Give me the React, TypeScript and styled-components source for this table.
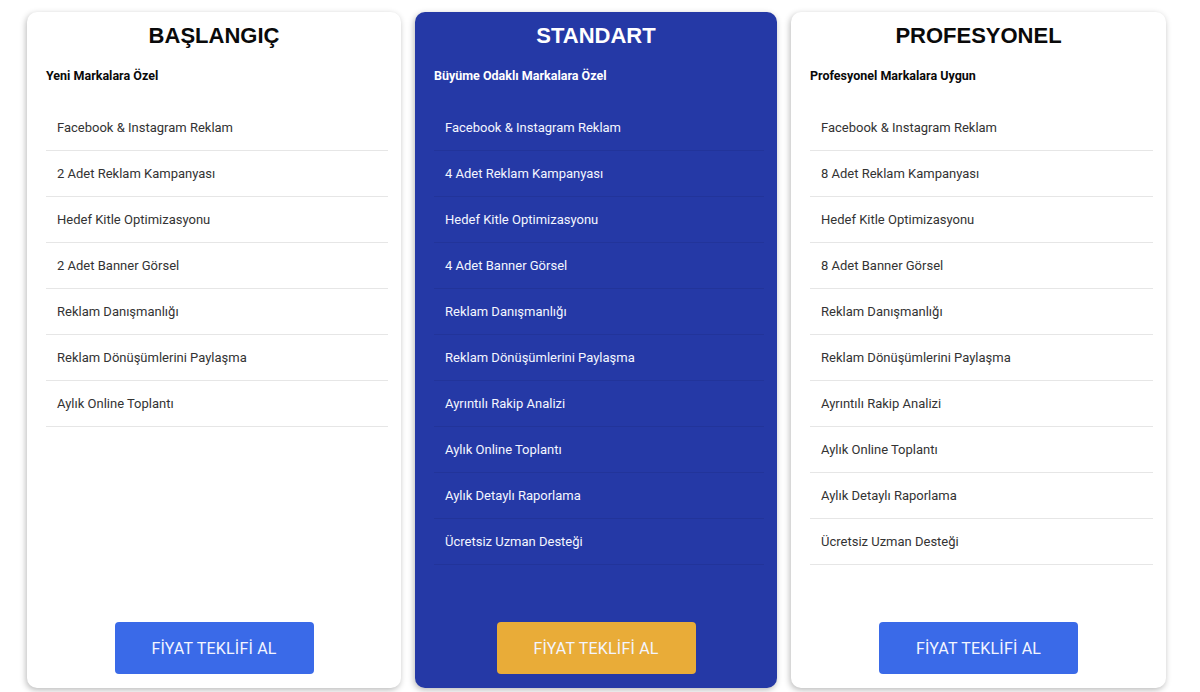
import styled, { createGlobalStyle } from 'styled-components';

const GlobalStyle = createGlobalStyle`
  html, body {
    margin: 0;
    padding: 0;
    background: #ffffff;
  }
  * {
    box-sizing: border-box;
  }
`;

const Page = styled.div`
  display: grid;
  grid-template-columns: 374px 362px 375px;
  column-gap: 14px;
  padding: 12px 0 0 27px;
  height: 692px;
  font-family: Roboto, "Noto Sans", sans-serif;
`;

const Card = styled.div<{ $featured?: boolean }>`
  display: flex;
  flex-direction: column;
  height: 676px;
  padding: 12px 13px 14px 19px;
  border-radius: 10px;
  background: ${(p) => (p.$featured ? '#2539a6' : '#ffffff')};
  color: ${(p) => (p.$featured ? '#ffffff' : '#0a0a0a')};
  box-shadow: -1px 2px 6px rgba(0, 0, 0, 0.28);
`;

const Title = styled.h2`
  margin: 0;
  font-family: "Liberation Sans", Arial, sans-serif;
  font-size: 22px;
  line-height: 24px;
  font-weight: 700;
  text-align: center;
  padding-right: 6px;
`;

const Subtitle = styled.div`
  margin-top: 20px;
  font-size: 12.5px;
  line-height: 16px;
  font-weight: 700;
`;

const FeatureList = styled.ul`
  list-style: none;
  margin: 21px 0 0 0;
  padding: 0;
  flex: 1;
`;

const Feature = styled.li<{ $featured?: boolean }>`
  height: 46px;
  display: flex;
  align-items: center;
  padding-left: 11px;
  font-size: 13px;
  color: ${(p) => (p.$featured ? '#f4f6ff' : '#333333')};
  border-bottom: 1px solid ${(p) => (p.$featured ? 'rgba(0, 0, 0, 0.07)' : '#e6e6e6')};
`;

const QuoteButton = styled.button<{ $featured?: boolean }>`
  align-self: center;
  margin-right: 6px;
  width: 199px;
  height: 52px;
  border: none;
  border-radius: 4px;
  background: ${(p) => (p.$featured ? '#e9ac38' : '#3a6ae8')};
  color: #f3f5ff;
  font-family: Roboto, "Noto Sans", sans-serif;
  font-size: 16px;
  font-weight: 400;
  letter-spacing: 0.2px;
  cursor: pointer;
`;

const plans = [
  {
    title: 'BAŞLANGIÇ',
    subtitle: 'Yeni Markalara Özel',
    featured: false,
    items: [
      'Facebook & Instagram Reklam',
      '2 Adet Reklam Kampanyası',
      'Hedef Kitle Optimizasyonu',
      '2 Adet Banner Görsel',
      'Reklam Danışmanlığı',
      'Reklam Dönüşümlerini Paylaşma',
      'Aylık Online Toplantı',
    ],
  },
  {
    title: 'STANDART',
    subtitle: 'Büyüme Odaklı Markalara Özel',
    featured: true,
    items: [
      'Facebook & Instagram Reklam',
      '4 Adet Reklam Kampanyası',
      'Hedef Kitle Optimizasyonu',
      '4 Adet Banner Görsel',
      'Reklam Danışmanlığı',
      'Reklam Dönüşümlerini Paylaşma',
      'Ayrıntılı Rakip Analizi',
      'Aylık Online Toplantı',
      'Aylık Detaylı Raporlama',
      'Ücretsiz Uzman Desteği',
    ],
  },
  {
    title: 'PROFESYONEL',
    subtitle: 'Profesyonel Markalara Uygun',
    featured: false,
    items: [
      'Facebook & Instagram Reklam',
      '8 Adet Reklam Kampanyası',
      'Hedef Kitle Optimizasyonu',
      '8 Adet Banner Görsel',
      'Reklam Danışmanlığı',
      'Reklam Dönüşümlerini Paylaşma',
      'Ayrıntılı Rakip Analizi',
      'Aylık Online Toplantı',
      'Aylık Detaylı Raporlama',
      'Ücretsiz Uzman Desteği',
    ],
  },
];

const App = () => {
  return (
    <>
      <GlobalStyle />
      <Page>
        {plans.map((plan) => (
          <Card key={plan.title} $featured={plan.featured}>
            <Title>{plan.title}</Title>
            <Subtitle>{plan.subtitle}</Subtitle>
            <FeatureList>
              {plan.items.map((item) => (
                <Feature key={item} $featured={plan.featured}>
                  {item}
                </Feature>
              ))}
            </FeatureList>
            <QuoteButton $featured={plan.featured}>FİYAT TEKLİFİ AL</QuoteButton>
          </Card>
        ))}
      </Page>
    </>
  );
};

export default App;
